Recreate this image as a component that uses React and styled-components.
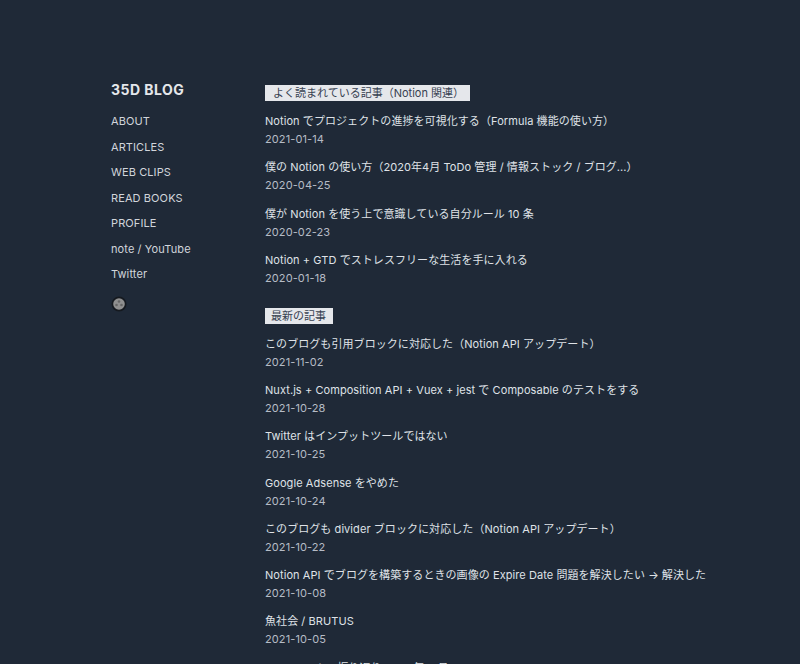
import React from 'react';
import styled, { createGlobalStyle } from 'styled-components';

const GlobalStyle = createGlobalStyle`
  html, body {
    margin: 0;
    height: 100%;
    overflow: hidden;
    background: #1f2937;
  }
  body {
    font-family: Inter, "Noto Sans CJK JP", sans-serif;
  }
`;

const Page = styled.div`
  display: flex;
  height: 664px;
  overflow: hidden;
  padding: 80px 0 0 111px;
  box-sizing: border-box;
  color: #e5e7eb;
  background: #1f2937;
`;

const Sidebar = styled.aside`
  width: 154px;
  flex-shrink: 0;
`;

const Logo = styled.div`
  font-size: 14px;
  font-weight: 700;
  line-height: 20px;
  letter-spacing: 0.45px;
  margin-bottom: 11px;
`;

const NavList = styled.nav`
  display: flex;
  flex-direction: column;
  gap: 5.5px;
`;

const NavLink = styled.a`
  font-size: 11px;
  line-height: 20px;
  letter-spacing: 0.1px;
  color: #d1d5db;
`;

const Avatar = styled.svg`
  display: block;
  width: 16px;
  height: 16px;
  margin-top: 12px;
`;

const Main = styled.main`
  flex: 1;
`;

const Section = styled.section`
  margin-bottom: 15px;
`;

const Heading = styled.h2`
  display: inline-block;
  margin: 5px 0 0;
  padding: 0 ${(p) => p.$right}px 0 ${(p) => p.$left}px;
  background: #e5e7eb;
  color: #374151;
  font-size: 11px;
  font-weight: 400;
  line-height: 16px;
`;

const PostList = styled.ul`
  list-style: none;
  margin: 11px 0 0;
  padding: 0;
  display: flex;
  flex-direction: column;
  gap: 9.25px;
`;

const PostTitle = styled.a`
  display: block;
  font-size: 11px;
  line-height: 18px;
  letter-spacing: 0.07px;
  color: #dfe2e7;
  white-space: nowrap;
`;

const PostDate = styled.div`
  font-size: 11px;
  line-height: 19px;
  letter-spacing: 0.1px;
  color: #b6bcc6;
`;

const popular = [
  ['Notion でプロジェクトの進捗を可視化する（Formula 機能の使い方）', '2021-01-14'],
  ['僕の Notion の使い方（2020年4月 ToDo 管理 / 情報ストック / ブログ...）', '2020-04-25'],
  ['僕が Notion を使う上で意識している自分ルール 10 条', '2020-02-23'],
  ['Notion + GTD でストレスフリーな生活を手に入れる', '2020-01-18'],
];

const latest = [
  ['このブログも引用ブロックに対応した（Notion API アップデート）', '2021-11-02'],
  ['Nuxt.js + Composition API + Vuex + jest で Composable のテストをする', '2021-10-28'],
  ['Twitter はインプットツールではない', '2021-10-25'],
  ['Google Adsense をやめた', '2021-10-24'],
  ['このブログも divider ブロックに対応した（Notion API アップデート）', '2021-10-22'],
  ['Notion API でブログを構築するときの画像の Expire Date 問題を解決したい → 解決した', '2021-10-08'],
  ['魚社会 / BRUTUS', '2021-10-05'],
  ['weekly notes 振り返り 2021 年 9 月', '2021-10-01'],
];

const nav = ['ABOUT', 'ARTICLES', 'WEB CLIPS', 'READ BOOKS', 'PROFILE', 'note / YouTube', 'Twitter'];

const Posts = ({ items }) => (
  <PostList>
    {items.map(([title, date]) => (
      <li key={title}>
        <PostTitle>{title}</PostTitle>
        <PostDate>{date}</PostDate>
      </li>
    ))}
  </PostList>
);

const App = () => (
  <Page>
    <GlobalStyle />
    <Sidebar>
      <Logo>35D BLOG</Logo>
      <NavList>
        {nav.map((n) => (
          <NavLink key={n}>{n}</NavLink>
        ))}
      </NavList>
      <Avatar viewBox="0 0 16 16">
        <circle cx="8" cy="8" r="7.5" fill="#15191f" />
        <circle cx="8" cy="8" r="5.8" fill="#8f8f8f" />
        <circle cx="8" cy="5.5" r="1.3" fill="#666" />
        <circle cx="5.5" cy="9" r="1.3" fill="#666" />
        <circle cx="10.5" cy="9" r="1.3" fill="#666" />
      </Avatar>
    </Sidebar>
    <Main>
      <Section>
        <Heading $left={8} $right={6}>よく読まれている記事（Notion 関連）</Heading>
        <Posts items={popular} />
      </Section>
      <Section>
        <Heading $left={6} $right={7}>最新の記事</Heading>
        <Posts items={latest} />
      </Section>
    </Main>
  </Page>
);

export default App;
